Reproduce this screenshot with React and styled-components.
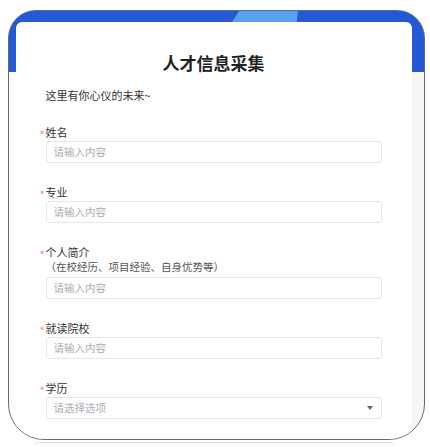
import React from "react";
import styled, { createGlobalStyle } from "styled-components";

const GlobalStyle = createGlobalStyle`
  html, body {
    margin: 0;
    padding: 0;
    background: #ffffff;
    font-family: "Noto Sans CJK SC", "Noto Sans", sans-serif;
    overflow: hidden;
  }
`;

const Page = styled.div`
  padding: 10px 5px 0 8px;
  height: 447px;
  box-sizing: border-box;
  overflow: hidden;
`;

const Frame = styled.div`
  position: relative;
  width: 417px;
  height: 430px;
  box-sizing: border-box;
  border: 1.5px solid #6a6a6a;
  border-radius: 28px 28px 36px 36px;
  overflow: hidden;
  display: flex;
  flex-direction: column;
  padding: 10.5px 12.5px 0 6.5px;
  background:
    linear-gradient(#2358d6, #2358d6) top left / 100% 61px no-repeat,
    linear-gradient(to right, #fdfdfd 0 401px, #f6f6f6 401px);

  &::before {
    content: "";
    position: absolute;
    top: 0;
    left: 223px;
    width: 66px;
    height: 11px;
    background: #56a3f4;
    clip-path: polygon(7px 0, 100% 0, 99% 50%, 98% 100%, 0 100%);
  }
`;

const Card = styled.div`
  position: relative;
  flex: 1;
  background: #ffffff;
  border-radius: 6px 6px 0 0;
  padding: 29px 30px 0;
`;

const Title = styled.h1`
  margin: 0;
  text-align: center;
  font-size: 17px;
  line-height: 24px;
  font-weight: 700;
  color: #222222;
`;

const Subtitle = styled.p`
  margin: 12px 0 22px;
  font-size: 11px;
  line-height: 16px;
  color: #333333;
`;

const Item = styled.div`
  margin-bottom: 22px;
`;

const Label = styled.div`
  display: flex;
  align-items: center;
  margin-left: -6px;
  font-size: 11px;
  line-height: 14px;
  color: #333333;
  margin-bottom: ${(p) => (p.$hasHint ? "0" : "2px")};
`;

const Star = styled.span`
  width: 6px;
  color: #f78989;
  font-size: 11px;
  transform: translateY(2px);
`;

const Hint = styled.div`
  font-size: 10.5px;
  line-height: 16px;
  color: #555555;
  margin-bottom: 2px;
`;

const Input = styled.input`
  display: block;
  box-sizing: border-box;
  width: 100%;
  height: 22px;
  margin: 0;
  padding: 0 7px;
  border: 1px solid #e6e6e6;
  border-radius: 3px;
  background: #ffffff;
  font-family: inherit;
  font-size: 10.5px;
  color: #333333;
  outline: none;

  &::placeholder {
    color: #aaadb3;
  }
`;

const Select = styled.div`
  box-sizing: border-box;
  height: 22px;
  padding: 0 7px;
  border: 1px solid #e6e6e6;
  border-radius: 3px;
  display: flex;
  align-items: center;
  justify-content: space-between;
  font-size: 10.5px;
  color: #aaadb3;
`;

const Caret = styled.span`
  width: 0;
  height: 0;
  border-left: 3px solid transparent;
  border-right: 3px solid transparent;
  border-top: 4px solid #666666;
  margin-right: 1px;
`;

const NextFrame = styled.div`
  margin: 2px 30px 0 26px;
  height: 4px;
  border-top: 1px solid #dddddd;
  border-radius: 40px 40px 0 0;
`;

const fields = [
  { label: "姓名" },
  { label: "专业" },
  { label: "个人简介", hint: "（在校经历、项目经验、自身优势等）" },
  { label: "就读院校" },
];

const App = () => {
  return (
    <>
      <GlobalStyle />
      <Page>
        <Frame>
          <Card>
            <Title>人才信息采集</Title>
            <Subtitle>这里有你心仪的未来~</Subtitle>
            {fields.map((f) => (
              <Item key={f.label}>
                <Label $hasHint={!!f.hint}>
                  <Star>*</Star>
                  {f.label}
                </Label>
                {f.hint && <Hint>{f.hint}</Hint>}
                <Input placeholder="请输入内容" />
              </Item>
            ))}
            <Item>
              <Label>
                <Star>*</Star>
                学历
              </Label>
              <Select>
                请选择选项
                <Caret />
              </Select>
            </Item>
          </Card>
        </Frame>
        <NextFrame />
      </Page>
    </>
  );
};

export default App;
